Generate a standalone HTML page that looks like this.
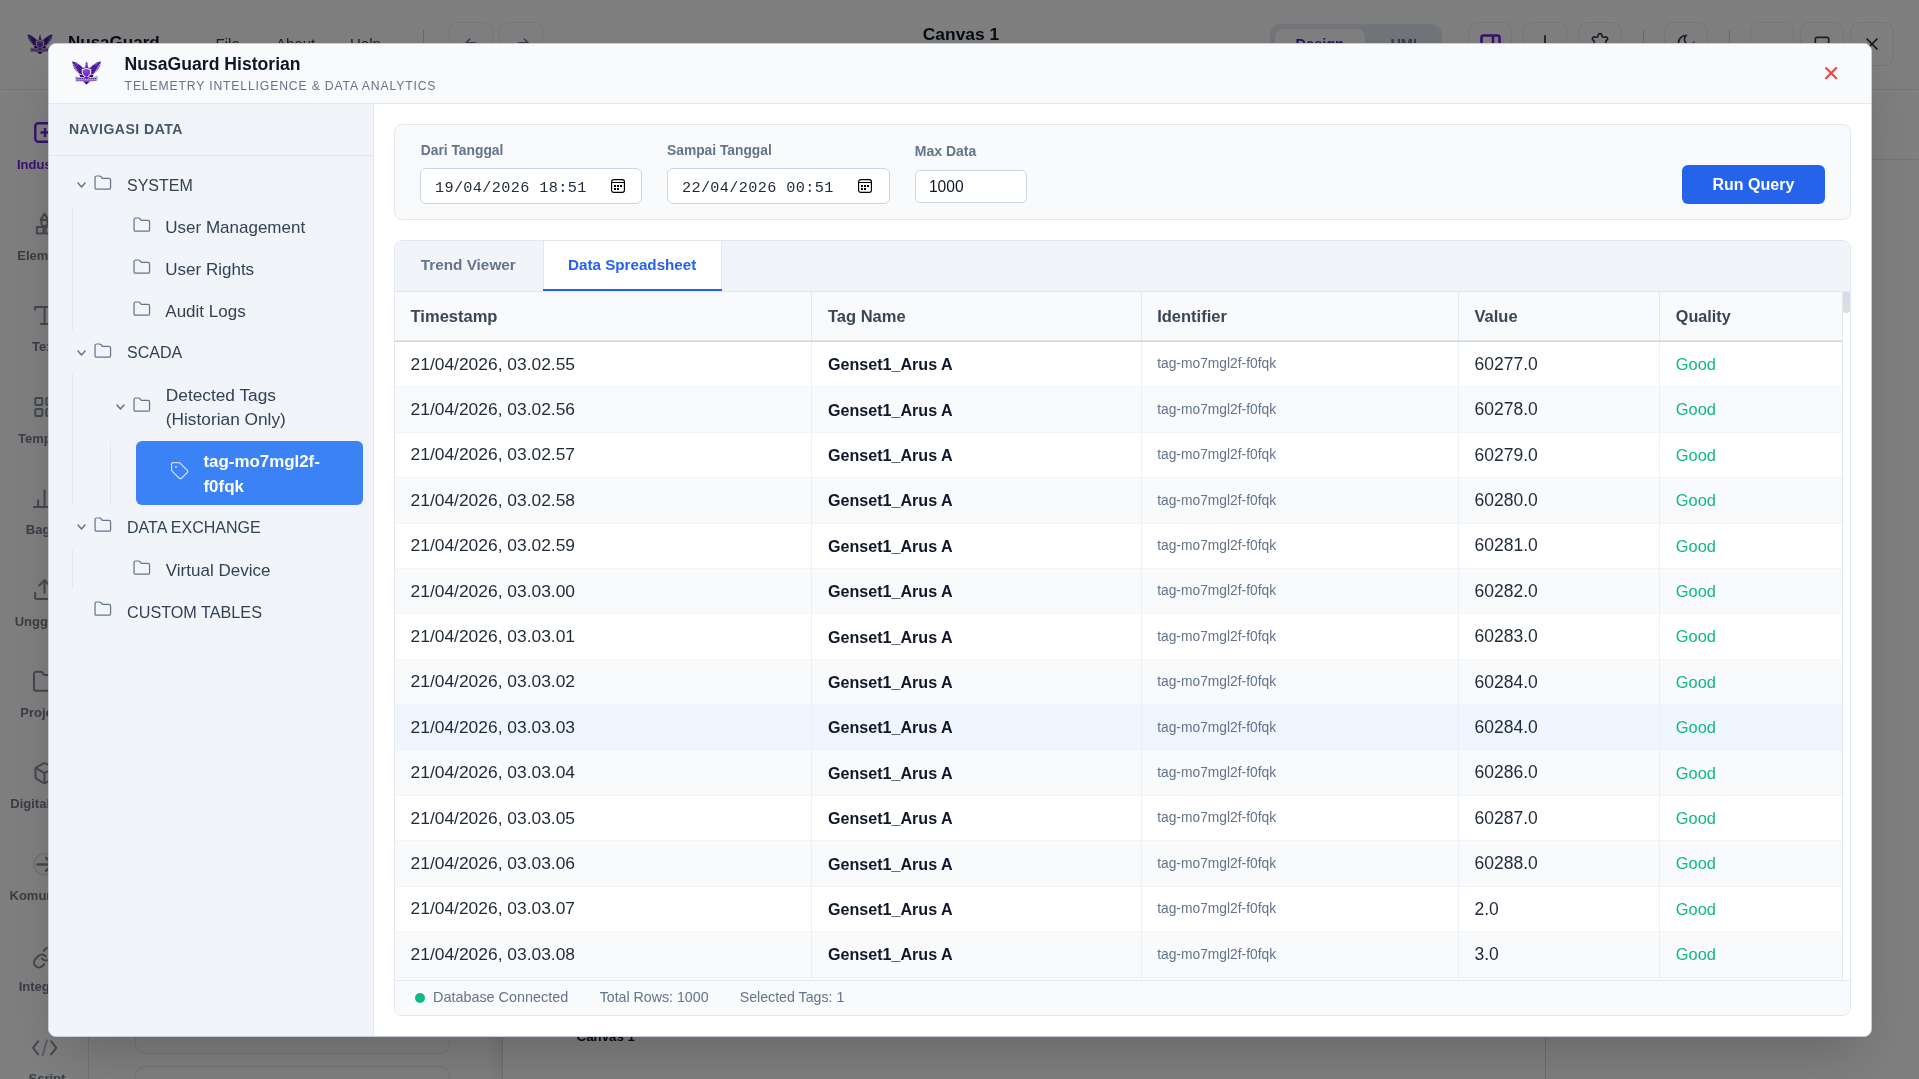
<!DOCTYPE html>
<html><head><meta charset="utf-8"><title>NusaGuard Historian</title>
<style>
html,body{margin:0;padding:0}
body{width:1919px;height:1079px;overflow:hidden;position:relative;font-family:"Liberation Sans",sans-serif;background:#808080}
.t{position:absolute;white-space:nowrap}
.r{position:absolute}
</style></head><body>
<div class="r" style="left:0;top:0;width:1919px;height:1079px;will-change:transform;overflow:hidden"><div class="r" style="left:0.00px;top:0.00px;width:1919.00px;height:1079.00px;background:#f8fafc"></div><div class="r" style="left:0.00px;top:0.00px;width:1919.00px;height:89.00px;background:#fff;border-bottom:1px solid #e2e8f0;box-sizing:content-box"></div><svg class="r" style="left:26.6px;top:33.8px" width="26" height="20.5" viewBox="0 0 29 23.5">
<defs><linearGradient id="lgbg" x1="0" y1="0" x2="0" y2="1"><stop offset="0" stop-color="#9d4edd"/><stop offset="1" stop-color="#5b21b6"/></linearGradient></defs>
<path d="M0.2 0.3 C4 1.5 8 3.5 10.8 6.8 L11.8 13.5 L8 13 C5 11.5 2.5 8.5 1 4.8 Z" fill="#4c1d95"/>
<path d="M28.8 0.3 C25 1.5 21 3.5 18.2 6.8 L17.2 13.5 L21 13 C24 11.5 26.5 8.5 28 4.8 Z" fill="#4c1d95"/>
<path d="M3 1.6 L6 4.2" stroke="#7c3aed" stroke-width="1.6"/><path d="M26 1.6 L23 4.2" stroke="#7c3aed" stroke-width="1.6"/>
<path d="M0.9 2.8 L3.6 6.2 M1.7 5.4 L5 8.8 M3.2 8.4 L6.6 11.4" stroke="#d8cfe8" stroke-width=".9" opacity=".85"/>
<path d="M28.1 2.8 L25.4 6.2 M27.3 5.4 L24 8.8 M25.8 8.4 L22.4 11.4" stroke="#d8cfe8" stroke-width=".9" opacity=".85"/>
<path d="M13.3 7 L13.7 2.2 L14.6 0.8 L15.5 2.2 L15.9 7 Z" fill="#5b21b6"/>
<path d="M14.2 2.2 L15.1 2.7 L14.8 4.8Z" fill="#e9d5ff"/>
<path d="M9.2 8 L14.5 6.4 L19.8 8 L19.6 12 C19.1 14.2 16.9 16.2 14.5 17.8 C12.1 16.2 9.9 14.2 9.4 12 Z" fill="#f1ecf9" stroke="#2e1065" stroke-width=".7"/>
<path d="M10.7 8.9 L14.5 7.7 L18.3 8.9 L18.1 12 C17.6 13.7 16.2 15 14.5 16.2 C12.8 15 11.4 13.7 10.9 12 Z" fill="url(#lgbg)"/>
<path d="M7.2 13.6 L10.5 14.3 L14.5 18 L18.5 14.3 L21.8 13.6 L20.5 16.3 L8.5 16.3 Z" fill="#3b0764"/>
<path d="M3 15.6 L9.5 16.2 L14.5 18.6 L19.5 16.2 L26 15 L25.4 19.8 L19 20.6 L14.5 21.6 L10 20.6 L3.6 20.4 Z" fill="#b7a6d6"/>
<path d="M4.6 17.5 H24.6 M4.6 19.2 H24.2" stroke="#5b21b6" stroke-width=".95" stroke-dasharray="1.3 .5"/>
<path d="M11.2 20.6 L14.5 23.4 L17.8 20.6 Z" fill="#3b0764"/>
</svg><div class="t" style="left:68.00px;top:34.40px;font-size:17px;line-height:17px;color:#0f172a;font-weight:700;letter-spacing:0px;">NusaGuard</div><div class="t" style="left:215.60px;top:35.50px;font-size:15px;line-height:15px;color:#334155;font-weight:400;letter-spacing:0px;">File</div><div class="t" style="left:276.00px;top:35.50px;font-size:15px;line-height:15px;color:#334155;font-weight:400;letter-spacing:0px;">About</div><div class="t" style="left:350.00px;top:35.50px;font-size:15px;line-height:15px;color:#334155;font-weight:400;letter-spacing:0px;">Help</div><div class="r" style="left:423.00px;top:30.00px;width:1.00px;height:30.00px;background:#cbd5e1"></div><div class="r" style="left:449.00px;top:22.30px;width:44.00px;height:44.00px;border:1px solid #e9edf2;border-radius:9px;box-sizing:border-box"></div><svg class="r" style="left:462.50px;top:35.50px;overflow:visible;" width="18" height="18" viewBox="0 0 24 24"><path d="M9 14 4 9l5-5M4 9h10.5a5.5 5.5 0 0 1 5.5 5.5a5.5 5.5 0 0 1-5.5 5.5H11" fill="none" stroke="#64748b" stroke-width="2" stroke-linecap="round" stroke-linejoin="round"/></svg><div class="r" style="left:499.00px;top:22.30px;width:44.00px;height:44.00px;border:1px solid #e9edf2;border-radius:9px;box-sizing:border-box"></div><svg class="r" style="left:512.50px;top:35.50px;overflow:visible;" width="18" height="18" viewBox="0 0 24 24"><path d="m15 14 5-5-5-5M20 9H9.5A5.5 5.5 0 0 0 4 14.5A5.5 5.5 0 0 0 9.5 20H13" fill="none" stroke="#64748b" stroke-width="2" stroke-linecap="round" stroke-linejoin="round"/></svg><div class="t" style="left:922.80px;top:25.70px;font-size:17.4px;line-height:17.4px;color:#0f172a;font-weight:700;letter-spacing:0px;">Canvas 1</div><div class="r" style="left:1270.00px;top:24.00px;width:172.00px;height:40.00px;background:#e2e8f0;border-radius:11px"></div><div class="r" style="left:1275.00px;top:28.50px;width:90.00px;height:31.00px;background:#fff;border-radius:8px;box-shadow:0 1px 2px rgba(0,0,0,.08)"></div><div class="t" style="left:1295.60px;top:36.75px;font-size:14.5px;line-height:14.5px;color:#5b21b6;font-weight:700;letter-spacing:0px;">Design</div><div class="t" style="left:1390.40px;top:36.75px;font-size:14.5px;line-height:14.5px;color:#64748b;font-weight:700;letter-spacing:0px;">HMI</div><div class="r" style="left:1468.00px;top:22.30px;width:44.00px;height:44.00px;border:1px solid #e9edf2;border-radius:9px;box-sizing:border-box;background:#fff"></div><div class="r" style="left:1523.00px;top:22.30px;width:44.00px;height:44.00px;border:1px solid #e9edf2;border-radius:9px;box-sizing:border-box;background:#fff"></div><div class="r" style="left:1578.00px;top:22.30px;width:44.00px;height:44.00px;border:1px solid #e9edf2;border-radius:9px;box-sizing:border-box;background:#fff"></div><div class="r" style="left:1664.00px;top:22.30px;width:44.00px;height:44.00px;border:1px solid #e9edf2;border-radius:9px;box-sizing:border-box;background:#fff"></div><div class="r" style="left:1750.00px;top:22.30px;width:44.00px;height:44.00px;border:1px solid #e9edf2;border-radius:9px;box-sizing:border-box;background:#fff"></div><div class="r" style="left:1800.00px;top:22.30px;width:44.00px;height:44.00px;border:1px solid #e9edf2;border-radius:9px;box-sizing:border-box;background:#fff"></div><div class="r" style="left:1850.00px;top:22.30px;width:44.00px;height:44.00px;border:1px solid #e9edf2;border-radius:9px;box-sizing:border-box;background:#fff"></div><svg class="r" style="left:1480.40px;top:33.80px;overflow:visible;" width="21" height="20" viewBox="0 0 21 20"><rect x="1.5" y="1.5" width="18" height="17" rx="2" fill="none" stroke="#6d28d9" stroke-width="2.6"/><path d="M13 1.5V18.5" stroke="#6d28d9" stroke-width="2.6"/></svg><svg class="r" style="left:1535.00px;top:34.00px;overflow:visible;" width="20" height="20" viewBox="0 0 20 20"><path d="M10 2V16M5 16H15" stroke="#475569" stroke-width="2" stroke-linecap="round"/></svg><svg class="r" style="left:1590.00px;top:32.00px;overflow:visible;" width="20" height="20" viewBox="0 0 24 24"><path d="M12.22 2h-.44a2 2 0 0 0-2 2v.18a2 2 0 0 1-1 1.73l-.43.25a2 2 0 0 1-2 0l-.15-.08a2 2 0 0 0-2.73.73l-.22.38a2 2 0 0 0 .73 2.73l.15.1a2 2 0 0 1 1 1.72v.51a2 2 0 0 1-1 1.74l-.15.09a2 2 0 0 0-.73 2.73l.22.38a2 2 0 0 0 2.73.73l.15-.08a2 2 0 0 1 2 0l.43.25a2 2 0 0 1 1 1.73V20a2 2 0 0 0 2 2h.44a2 2 0 0 0 2-2v-.18a2 2 0 0 1 1-1.73l.43-.25a2 2 0 0 1 2 0l.15.08a2 2 0 0 0 2.73-.73l.22-.39a2 2 0 0 0-.73-2.73l-.15-.08a2 2 0 0 1-1-1.74v-.5a2 2 0 0 1 1-1.74l.15-.09a2 2 0 0 0 .73-2.73l-.22-.38a2 2 0 0 0-2.73-.73l-.15.08a2 2 0 0 1-2 0l-.43-.25a2 2 0 0 1-1-1.73V4a2 2 0 0 0-2-2z" fill="none" stroke="#334155" stroke-width="2"/></svg><svg class="r" style="left:1676.00px;top:33.00px;overflow:visible;" width="20" height="20" viewBox="0 0 24 24"><path d="M12 3a6 6 0 0 0 9 9 9 9 0 1 1-9-9Z" fill="none" stroke="#334155" stroke-width="2"/></svg><svg class="r" style="left:1812.00px;top:34.00px;overflow:visible;" width="20" height="20" viewBox="0 0 24 24"><rect x="4" y="4" width="16" height="16" rx="2" fill="none" stroke="#334155" stroke-width="2"/></svg><svg class="r" style="left:1862.00px;top:34.00px;overflow:visible;" width="20" height="20" viewBox="0 0 24 24"><path d="M18 6L6 18M6 6l12 12" fill="none" stroke="#1e293b" stroke-width="2" stroke-linecap="round"/></svg><div class="r" style="left:1643.00px;top:30.00px;width:1.00px;height:28.00px;background:#cbd5e1"></div><div class="r" style="left:1729.00px;top:30.00px;width:1.00px;height:28.00px;background:#cbd5e1"></div><div class="r" style="left:0.00px;top:90.00px;width:89.00px;height:989.00px;background:#fff;border-right:1px solid #e2e8f0;box-sizing:border-box"></div><div class="t" style="left:17.00px;top:157.50px;font-size:13px;line-height:13px;color:#6d28d9;font-weight:700;letter-spacing:0px;">Industri</div><div class="t" style="left:17.30px;top:248.90px;font-size:13px;line-height:13px;color:#737d8d;font-weight:700;letter-spacing:0px;">Elements</div><div class="t" style="left:32.00px;top:340.30px;font-size:13px;line-height:13px;color:#737d8d;font-weight:700;letter-spacing:0px;">Text</div><div class="t" style="left:18.00px;top:431.70px;font-size:13px;line-height:13px;color:#737d8d;font-weight:700;letter-spacing:0px;">Template</div><div class="t" style="left:25.80px;top:523.10px;font-size:13px;line-height:13px;color:#737d8d;font-weight:700;letter-spacing:0px;">Bagan</div><div class="t" style="left:14.70px;top:614.50px;font-size:13px;line-height:13px;color:#737d8d;font-weight:700;letter-spacing:0px;">Unggah File</div><div class="t" style="left:20.30px;top:705.90px;font-size:13px;line-height:13px;color:#737d8d;font-weight:700;letter-spacing:0px;">Project</div><div class="t" style="left:10.30px;top:797.30px;font-size:13px;line-height:13px;color:#737d8d;font-weight:700;letter-spacing:0px;">Digital Twin</div><div class="t" style="left:9.50px;top:888.70px;font-size:13px;line-height:13px;color:#737d8d;font-weight:700;letter-spacing:0px;">Komunikasi</div><div class="t" style="left:18.70px;top:980.10px;font-size:13px;line-height:13px;color:#737d8d;font-weight:700;letter-spacing:0px;">Integrasi</div><div class="t" style="left:28.50px;top:1071.50px;font-size:13px;line-height:13px;color:#737d8d;font-weight:700;letter-spacing:0px;">Script</div><svg class="r" style="left:34.00px;top:122.00px;overflow:visible;" width="22" height="21" viewBox="0 0 22 21"><rect x="1.3" y="1.3" width="19.4" height="18.4" rx="3" fill="none" stroke="#6d28d9" stroke-width="2.4"/><path d="M11 6V15M6.5 10.5H15.5" stroke="#6d28d9" stroke-width="2.4"/></svg><svg class="r" style="left:0.00px;top:0.00px;overflow:visible;" width="90" height="1079" viewBox="0 0 90 1079"><g fill="none" stroke="#88909e" stroke-width="2" stroke-linecap="round" stroke-linejoin="round"><path d="M44.5 213.6 L40.6 219.9 H48.4 Z"/><circle cx="44.5" cy="222.9" r="3.2"/><rect x="36.9" y="226.9" width="6.6" height="6.5"/><rect x="45.5" y="226.9" width="6.6" height="6.5"/><path d="M35.2 309.6 V307.1 H53.8 V309.6 M44.6 307.1 V323.9 M41.1 323.9 H48.1" stroke-linecap="square" stroke-linejoin="miter"/><g transform="translate(32.3,395.1) scale(1.0)" stroke-width="2.000"><rect x="3" y="3" width="7" height="7" rx="1"/><rect x="14" y="3" width="7" height="7" rx="1"/><rect x="14" y="14" width="7" height="7" rx="1"/><rect x="3" y="14" width="7" height="7" rx="1"/></g><path d="M34.2 506.9 H54.8 M38.1 500.5 V506.9 M44.6 490.4 V506.9 M51.1 495.5 V506.9" stroke-linecap="square"/><g transform="translate(31.9,577.05) scale(1.05)" stroke-width="1.905"><path d="M21 15v4a2 2 0 0 1-2 2H5a2 2 0 0 1-2-2v-4"/><path d="m17 8-5-5-5 5"/><path d="M12 3v12"/></g><g transform="translate(31.76,668.4) scale(1.12)" stroke-width="1.786"><path d="M20 20a2 2 0 0 0 2-2V8a2 2 0 0 0-2-2h-7.9a2 2 0 0 1-1.69-.9L9.6 3.9A2 2 0 0 0 7.93 3H4a2 2 0 0 0-2 2v13a2 2 0 0 0 2 2Z"/></g><g transform="translate(32.5,761.2) scale(1.0)" stroke-width="2.000"><path d="M21 8a2 2 0 0 0-1-1.73l-7-4a2 2 0 0 0-2 0l-7 4A2 2 0 0 0 3 8v8a2 2 0 0 0 1 1.73l7 4a2 2 0 0 0 2 0l7-4A2 2 0 0 0 21 16Z"/><path d="m3.3 7 8.7 5 8.7-5"/><path d="M12 22V12"/></g><circle cx="44.6" cy="864.3" r="10.6" stroke="#e3e7ec" stroke-width="1.8"/><path d="M37.4 864.4 H52.5 M46 857.9 L52.5 864.4 L46 870.9" stroke-width="2.5"/><g transform="translate(32,945.5) scale(1.0)" stroke-width="2.000"><path d="M10 13a5 5 0 0 0 7.54.54l3-3a5 5 0 0 0-7.07-7.07l-1.72 1.71"/><path d="M14 11a5 5 0 0 0-7.54-.54l-3 3a5 5 0 0 0 7.07 7.07l1.71-1.71"/></g><path d="M38.2 1041.2 L33 1047.8 L38.2 1054.4 M51.1 1041.2 L56.3 1047.8 L51.1 1054.4"/><path d="M47 1040.2 L42.6 1055.4" stroke="#b3b9c2"/></g></svg><div class="r" style="left:89.00px;top:90.00px;width:414.00px;height:989.00px;background:#fff;border-right:1px solid #e2e8f0;box-sizing:border-box"></div><div class="r" style="left:135.00px;top:1000.00px;width:315.00px;height:54.00px;border:1px solid #e2e8f0;border-radius:10px;box-sizing:border-box"></div><div class="r" style="left:135.00px;top:1066.00px;width:315.00px;height:54.00px;border:1px solid #e2e8f0;border-radius:10px;box-sizing:border-box"></div><div class="r" style="left:503.00px;top:90.00px;width:1042.00px;height:989.00px;background:#f1f5f9"></div><div class="r" style="left:503.00px;top:1000.00px;width:1042.00px;height:79.00px;background:#fff;box-shadow:0 0 20px rgba(0,0,0,.15)"></div><div class="t" style="left:576.60px;top:1029.65px;font-size:13.3px;line-height:13.3px;color:#0f172a;font-weight:700;letter-spacing:0px;">Canvas 1</div><div class="r" style="left:1545.00px;top:90.00px;width:374.00px;height:989.00px;background:#fff;border-left:1px solid #d5dbe3;box-sizing:border-box"></div><div class="r" style="left:1546.00px;top:159.00px;width:373.00px;height:1.00px;background:#e2e8f0"></div></div><div class="r" style="left:0.00px;top:0.00px;width:1919.00px;height:1079.00px;background:rgba(0,0,0,.5)"></div><div class="r" style="will-change:transform;left:48px;top:43px;width:1824px;height:994px;box-sizing:border-box;border:1px solid #c5ced9;border-radius:8px;background:#fff;overflow:hidden;box-shadow:0 25px 50px -12px rgba(0,0,0,.2)"><div class="r" style="left:0.00px;top:0.00px;width:1822.00px;height:60.00px;background:#f8fafc;border-bottom:1px solid #e2e8f0;box-sizing:border-box"></div><div class="t" style="left:75.60px;top:11.90px;font-size:17.6px;line-height:17.6px;color:#0f172a;font-weight:700;letter-spacing:0px;">NusaGuard Historian</div><div class="t" style="left:75.60px;top:35.80px;font-size:12.2px;line-height:12.2px;color:#64748b;font-weight:400;letter-spacing:0.85px;">TELEMETRY INTELLIGENCE &amp; DATA ANALYTICS</div><svg class="r" style="left:1776.00px;top:23.20px;overflow:visible;" width="12.2" height="12.2" viewBox="0 0 12 12"><path d="M1 1L11 11M11 1L1 11" stroke="#ef4444" stroke-width="2.1" stroke-linecap="round"/></svg><svg class="r" style="left:22.9px;top:17.2px" width="29" height="23.5" viewBox="0 0 29 23.5">
<defs><linearGradient id="lgm" x1="0" y1="0" x2="0" y2="1"><stop offset="0" stop-color="#9d4edd"/><stop offset="1" stop-color="#5b21b6"/></linearGradient></defs>
<path d="M0.2 0.3 C4 1.5 8 3.5 10.8 6.8 L11.8 13.5 L8 13 C5 11.5 2.5 8.5 1 4.8 Z" fill="#4c1d95"/>
<path d="M28.8 0.3 C25 1.5 21 3.5 18.2 6.8 L17.2 13.5 L21 13 C24 11.5 26.5 8.5 28 4.8 Z" fill="#4c1d95"/>
<path d="M3 1.6 L6 4.2" stroke="#7c3aed" stroke-width="1.6"/><path d="M26 1.6 L23 4.2" stroke="#7c3aed" stroke-width="1.6"/>
<path d="M0.9 2.8 L3.6 6.2 M1.7 5.4 L5 8.8 M3.2 8.4 L6.6 11.4" stroke="#d8cfe8" stroke-width=".9" opacity=".85"/>
<path d="M28.1 2.8 L25.4 6.2 M27.3 5.4 L24 8.8 M25.8 8.4 L22.4 11.4" stroke="#d8cfe8" stroke-width=".9" opacity=".85"/>
<path d="M13.3 7 L13.7 2.2 L14.6 0.8 L15.5 2.2 L15.9 7 Z" fill="#5b21b6"/>
<path d="M14.2 2.2 L15.1 2.7 L14.8 4.8Z" fill="#e9d5ff"/>
<path d="M9.2 8 L14.5 6.4 L19.8 8 L19.6 12 C19.1 14.2 16.9 16.2 14.5 17.8 C12.1 16.2 9.9 14.2 9.4 12 Z" fill="#f1ecf9" stroke="#2e1065" stroke-width=".7"/>
<path d="M10.7 8.9 L14.5 7.7 L18.3 8.9 L18.1 12 C17.6 13.7 16.2 15 14.5 16.2 C12.8 15 11.4 13.7 10.9 12 Z" fill="url(#lgm)"/>
<path d="M7.2 13.6 L10.5 14.3 L14.5 18 L18.5 14.3 L21.8 13.6 L20.5 16.3 L8.5 16.3 Z" fill="#3b0764"/>
<path d="M3 15.6 L9.5 16.2 L14.5 18.6 L19.5 16.2 L26 15 L25.4 19.8 L19 20.6 L14.5 21.6 L10 20.6 L3.6 20.4 Z" fill="#b7a6d6"/>
<path d="M4.6 17.5 H24.6 M4.6 19.2 H24.2" stroke="#5b21b6" stroke-width=".95" stroke-dasharray="1.3 .5"/>
<path d="M11.2 20.6 L14.5 23.4 L17.8 20.6 Z" fill="#3b0764"/>
</svg><div class="r" style="left:0.00px;top:60.00px;width:325.00px;height:932.00px;background:#f1f5f9;border-right:1px solid #e2e8f0;box-sizing:border-box"></div><div class="r" style="left:0.00px;top:111.00px;width:324.00px;height:1.00px;background:#e2e8f0"></div><div class="t" style="left:20.00px;top:78.20px;font-size:14px;line-height:14px;color:#475569;font-weight:700;letter-spacing:0.5px;">NAVIGASI DATA</div><svg class="r" style="left:28.00px;top:138.00px;overflow:visible;" width="9" height="6.5" viewBox="0 0 9 6.5"><path d="M1 1 L4.5 5 L8 1" fill="none" stroke="#64748b" stroke-width="1.5" stroke-linecap="round" stroke-linejoin="round"/></svg><svg class="r" style="left:46.00px;top:131.80px;overflow:visible;" width="15.6" height="13.2" viewBox="2 3 20 17"><g fill="none" stroke="#64748b" stroke-width="1.60" stroke-linejoin="round"><path d="M20 20a2 2 0 0 0 2-2V8a2 2 0 0 0-2-2h-7.9a2 2 0 0 1-1.69-.9L9.6 3.9A2 2 0 0 0 7.93 3H4a2 2 0 0 0-2 2v13a2 2 0 0 0 2 2Z"/></g></svg><div class="t" style="left:78.00px;top:133.60px;font-size:16px;line-height:16px;color:#334155;font-weight:400;letter-spacing:0px;">SYSTEM</div><div class="r" style="left:23.00px;top:164.00px;width:1.00px;height:122.00px;background:#e2e8f0"></div><svg class="r" style="left:84.90px;top:174.00px;overflow:visible;" width="15.6" height="13.2" viewBox="2 3 20 17"><g fill="none" stroke="#64748b" stroke-width="1.60" stroke-linejoin="round"><path d="M20 20a2 2 0 0 0 2-2V8a2 2 0 0 0-2-2h-7.9a2 2 0 0 1-1.69-.9L9.6 3.9A2 2 0 0 0 7.93 3H4a2 2 0 0 0-2 2v13a2 2 0 0 0 2 2Z"/></g></svg><div class="t" style="left:116.30px;top:175.10px;font-size:17px;line-height:17px;color:#334155;font-weight:400;letter-spacing:0px;">User Management</div><svg class="r" style="left:84.90px;top:216.00px;overflow:visible;" width="15.6" height="13.2" viewBox="2 3 20 17"><g fill="none" stroke="#64748b" stroke-width="1.60" stroke-linejoin="round"><path d="M20 20a2 2 0 0 0 2-2V8a2 2 0 0 0-2-2h-7.9a2 2 0 0 1-1.69-.9L9.6 3.9A2 2 0 0 0 7.93 3H4a2 2 0 0 0-2 2v13a2 2 0 0 0 2 2Z"/></g></svg><div class="t" style="left:116.30px;top:217.10px;font-size:17px;line-height:17px;color:#334155;font-weight:400;letter-spacing:0px;">User Rights</div><svg class="r" style="left:84.90px;top:257.50px;overflow:visible;" width="15.6" height="13.2" viewBox="2 3 20 17"><g fill="none" stroke="#64748b" stroke-width="1.60" stroke-linejoin="round"><path d="M20 20a2 2 0 0 0 2-2V8a2 2 0 0 0-2-2h-7.9a2 2 0 0 1-1.69-.9L9.6 3.9A2 2 0 0 0 7.93 3H4a2 2 0 0 0-2 2v13a2 2 0 0 0 2 2Z"/></g></svg><div class="t" style="left:116.30px;top:258.60px;font-size:17px;line-height:17px;color:#334155;font-weight:400;letter-spacing:0px;">Audit Logs</div><svg class="r" style="left:28.00px;top:306.00px;overflow:visible;" width="9" height="6.5" viewBox="0 0 9 6.5"><path d="M1 1 L4.5 5 L8 1" fill="none" stroke="#64748b" stroke-width="1.5" stroke-linecap="round" stroke-linejoin="round"/></svg><svg class="r" style="left:46.00px;top:300.10px;overflow:visible;" width="15.6" height="13.2" viewBox="2 3 20 17"><g fill="none" stroke="#64748b" stroke-width="1.60" stroke-linejoin="round"><path d="M20 20a2 2 0 0 0 2-2V8a2 2 0 0 0-2-2h-7.9a2 2 0 0 1-1.69-.9L9.6 3.9A2 2 0 0 0 7.93 3H4a2 2 0 0 0-2 2v13a2 2 0 0 0 2 2Z"/></g></svg><div class="t" style="left:78.00px;top:301.40px;font-size:16px;line-height:16px;color:#334155;font-weight:400;letter-spacing:0px;">SCADA</div><div class="r" style="left:23.00px;top:330.00px;width:1.00px;height:130.00px;background:#e2e8f0"></div><svg class="r" style="left:66.50px;top:360.00px;overflow:visible;" width="9" height="6.5" viewBox="0 0 9 6.5"><path d="M1 1 L4.5 5 L8 1" fill="none" stroke="#64748b" stroke-width="1.5" stroke-linecap="round" stroke-linejoin="round"/></svg><svg class="r" style="left:84.90px;top:353.50px;overflow:visible;" width="15.6" height="13.2" viewBox="2 3 20 17"><g fill="none" stroke="#64748b" stroke-width="1.60" stroke-linejoin="round"><path d="M20 20a2 2 0 0 0 2-2V8a2 2 0 0 0-2-2h-7.9a2 2 0 0 1-1.69-.9L9.6 3.9A2 2 0 0 0 7.93 3H4a2 2 0 0 0-2 2v13a2 2 0 0 0 2 2Z"/></g></svg><div class="t" style="left:116.80px;top:342.95px;font-size:17.3px;line-height:17.3px;color:#334155;font-weight:400;letter-spacing:0px;">Detected Tags</div><div class="t" style="left:116.80px;top:366.95px;font-size:17.3px;line-height:17.3px;color:#334155;font-weight:400;letter-spacing:0px;">(Historian Only)</div><div class="r" style="left:61.00px;top:397.00px;width:1.00px;height:63.00px;background:#e2e8f0"></div><div class="r" style="left:87.00px;top:397.00px;width:227.00px;height:64.00px;background:#3b82f6;border-radius:6px"></div><svg class="r" style="left:120.50px;top:417.00px;overflow:visible;" width="19.2" height="19.2" viewBox="0 0 24 24"><g fill="none" stroke="#fff" stroke-width="1.5" stroke-linecap="round" stroke-linejoin="round" opacity=".75"><path d="M12.586 2.586A2 2 0 0 0 11.172 2H4a2 2 0 0 0-2 2v7.172a2 2 0 0 0 .586 1.414l8.704 8.704a2.426 2.426 0 0 0 3.42 0l6.58-6.58a2.426 2.426 0 0 0 0-3.42z"/><circle cx="7.5" cy="7.5" r=".5" fill="#fff"/></g></svg><div class="t" style="left:154.50px;top:410.45px;font-size:16.9px;line-height:16.9px;color:#fff;font-weight:700;letter-spacing:0px;">tag-mo7mgl2f-</div><div class="t" style="left:154.50px;top:434.85px;font-size:16.9px;line-height:16.9px;color:#fff;font-weight:700;letter-spacing:0px;">f0fqk</div><svg class="r" style="left:28.00px;top:480.00px;overflow:visible;" width="9" height="6.5" viewBox="0 0 9 6.5"><path d="M1 1 L4.5 5 L8 1" fill="none" stroke="#64748b" stroke-width="1.5" stroke-linecap="round" stroke-linejoin="round"/></svg><svg class="r" style="left:46.00px;top:474.30px;overflow:visible;" width="15.6" height="13.2" viewBox="2 3 20 17"><g fill="none" stroke="#64748b" stroke-width="1.60" stroke-linejoin="round"><path d="M20 20a2 2 0 0 0 2-2V8a2 2 0 0 0-2-2h-7.9a2 2 0 0 1-1.69-.9L9.6 3.9A2 2 0 0 0 7.93 3H4a2 2 0 0 0-2 2v13a2 2 0 0 0 2 2Z"/></g></svg><div class="t" style="left:78.00px;top:475.80px;font-size:16px;line-height:16px;color:#334155;font-weight:400;letter-spacing:0px;">DATA EXCHANGE</div><div class="r" style="left:23.00px;top:506.00px;width:1.00px;height:39.00px;background:#e2e8f0"></div><svg class="r" style="left:84.90px;top:516.50px;overflow:visible;" width="15.6" height="13.2" viewBox="2 3 20 17"><g fill="none" stroke="#64748b" stroke-width="1.60" stroke-linejoin="round"><path d="M20 20a2 2 0 0 0 2-2V8a2 2 0 0 0-2-2h-7.9a2 2 0 0 1-1.69-.9L9.6 3.9A2 2 0 0 0 7.93 3H4a2 2 0 0 0-2 2v13a2 2 0 0 0 2 2Z"/></g></svg><div class="t" style="left:116.80px;top:517.60px;font-size:17px;line-height:17px;color:#334155;font-weight:400;letter-spacing:0px;">Virtual Device</div><svg class="r" style="left:46.00px;top:557.80px;overflow:visible;" width="15.6" height="13.2" viewBox="2 3 20 17"><g fill="none" stroke="#64748b" stroke-width="1.60" stroke-linejoin="round"><path d="M20 20a2 2 0 0 0 2-2V8a2 2 0 0 0-2-2h-7.9a2 2 0 0 1-1.69-.9L9.6 3.9A2 2 0 0 0 7.93 3H4a2 2 0 0 0-2 2v13a2 2 0 0 0 2 2Z"/></g></svg><div class="t" style="left:78.00px;top:559.50px;font-size:16.2px;line-height:16.2px;color:#334155;font-weight:400;letter-spacing:0px;">CUSTOM TABLES</div><div class="r" style="left:345.00px;top:80.00px;width:1457.00px;height:96.00px;background:#f8fafc;border:1px solid #e2e8f0;border-radius:8px;box-sizing:border-box"></div><div class="t" style="left:371.80px;top:99.70px;font-size:13.8px;line-height:13.8px;color:#64748b;font-weight:700;letter-spacing:0px;">Dari Tanggal</div><div class="t" style="left:618.00px;top:99.70px;font-size:13.8px;line-height:13.8px;color:#64748b;font-weight:700;letter-spacing:0px;">Sampai Tanggal</div><div class="t" style="left:865.80px;top:100.40px;font-size:14px;line-height:14px;color:#64748b;font-weight:700;letter-spacing:0px;">Max Data</div><div class="r" style="left:371.00px;top:124.00px;width:222.00px;height:36.00px;background:#fff;border:1px solid #cbd5e1;border-radius:6px;box-sizing:border-box"></div><div class="t" style="left:385.90px;top:137.30px;font-size:15.2px;line-height:15.2px;color:#1e293b;font-weight:400;letter-spacing:0.38px;font-family:'Liberation Mono',monospace;">19/04/2026 18:51</div><svg class="r" style="left:562.00px;top:135.00px;overflow:visible;" width="14" height="14" viewBox="0 0 14 14"><rect x="0.6" y="0.6" width="12.8" height="12.8" rx="2.2" fill="none" stroke="#000" stroke-width="1.15"/><path d="M0.6 3.5H13.4" stroke="#000" stroke-width="1.1"/><g fill="#000"><rect x="3" y="6" width="2" height="2"/><rect x="6" y="6" width="2" height="2"/><rect x="9" y="6" width="2" height="2"/><rect x="3" y="9" width="2" height="2"/><rect x="6" y="9" width="2" height="2"/></g></svg><div class="r" style="left:618.00px;top:124.00px;width:223.00px;height:36.00px;background:#fff;border:1px solid #cbd5e1;border-radius:6px;box-sizing:border-box"></div><div class="t" style="left:632.90px;top:137.30px;font-size:15.2px;line-height:15.2px;color:#1e293b;font-weight:400;letter-spacing:0.38px;font-family:'Liberation Mono',monospace;">22/04/2026 00:51</div><svg class="r" style="left:809.00px;top:135.00px;overflow:visible;" width="14" height="14" viewBox="0 0 14 14"><rect x="0.6" y="0.6" width="12.8" height="12.8" rx="2.2" fill="none" stroke="#000" stroke-width="1.15"/><path d="M0.6 3.5H13.4" stroke="#000" stroke-width="1.1"/><g fill="#000"><rect x="3" y="6" width="2" height="2"/><rect x="6" y="6" width="2" height="2"/><rect x="9" y="6" width="2" height="2"/><rect x="3" y="9" width="2" height="2"/><rect x="6" y="9" width="2" height="2"/></g></svg><div class="r" style="left:866.00px;top:126.00px;width:112.00px;height:33.00px;background:#fff;border:1px solid #cbd5e1;border-radius:5px;box-sizing:border-box"></div><div class="t" style="left:879.90px;top:134.50px;font-size:15.6px;line-height:15.6px;color:#0f172a;font-weight:400;letter-spacing:0px;">1000</div><div class="r" style="left:1633.00px;top:121.00px;width:143.00px;height:39.00px;background:#2563eb;border-radius:6px"></div><div class="t" style="left:1663.50px;top:132.60px;font-size:16px;line-height:16px;color:#fff;font-weight:700;letter-spacing:0px;">Run Query</div><div class="r" style="left:345.00px;top:196.00px;width:1457.00px;height:776.00px;background:#fff;border:1px solid #e2e8f0;border-radius:8px;box-sizing:border-box"></div><div class="r" style="left:346.00px;top:197.00px;width:1455.00px;height:51.00px;background:#f1f5f9;border-bottom:1px solid #e2e8f0;box-sizing:border-box;border-radius:7px 7px 0 0"></div><div class="r" style="left:493.60px;top:197.00px;width:179.80px;height:50.00px;background:#fff;border-left:1px solid #e2e8f0;border-right:1px solid #e2e8f0;box-sizing:border-box"></div><div class="r" style="left:494.00px;top:245.00px;width:179.00px;height:2.00px;background:#2563eb"></div><div class="t" style="left:371.80px;top:212.75px;font-size:15.3px;line-height:15.3px;color:#64748b;font-weight:700;letter-spacing:0px;">Trend Viewer</div><div class="t" style="left:519.00px;top:212.80px;font-size:15.2px;line-height:15.2px;color:#2563eb;font-weight:700;letter-spacing:0px;">Data Spreadsheet</div><div class="r" style="left:346.00px;top:248.00px;width:1447.00px;height:50.00px;background:#f8fafc;border-bottom:1px solid #cbd5e1;box-sizing:border-box"></div><div class="r" style="left:346.00px;top:296.00px;width:1447.00px;height:1.00px;background:#e4e9f0"></div><div class="r" style="left:762.00px;top:248.00px;width:1.00px;height:48.00px;background:#e2e8f0"></div><div class="r" style="left:1092.00px;top:248.00px;width:1.00px;height:48.00px;background:#e2e8f0"></div><div class="r" style="left:1409.00px;top:248.00px;width:1.00px;height:48.00px;background:#e2e8f0"></div><div class="r" style="left:1610.00px;top:248.00px;width:1.00px;height:48.00px;background:#e2e8f0"></div><div class="t" style="left:361.60px;top:263.75px;font-size:16.5px;line-height:16.5px;color:#3a4658;font-weight:700;letter-spacing:0px;">Timestamp</div><div class="t" style="left:779.00px;top:263.75px;font-size:16.5px;line-height:16.5px;color:#3a4658;font-weight:700;letter-spacing:0px;">Tag Name</div><div class="t" style="left:1108.20px;top:263.75px;font-size:16.5px;line-height:16.5px;color:#3a4658;font-weight:700;letter-spacing:0px;">Identifier</div><div class="t" style="left:1425.50px;top:263.75px;font-size:16.5px;line-height:16.5px;color:#3a4658;font-weight:700;letter-spacing:0px;">Value</div><div class="t" style="left:1626.80px;top:263.90px;font-size:16.2px;line-height:16.2px;color:#3a4658;font-weight:700;letter-spacing:0px;">Quality</div><div class="r" style="left:346px;top:298px;width:1447px;height:638px;overflow:hidden"><div class="r" style="left:0.00px;top:0.00px;width:1448.00px;height:45.40px;background:#ffffff;border-bottom:1px solid #f1f5f9;box-sizing:border-box"></div><div class="r" style="left:416.00px;top:0.00px;width:1.00px;height:45.40px;background:#edf1f7"></div><div class="r" style="left:746.00px;top:0.00px;width:1.00px;height:45.40px;background:#edf1f7"></div><div class="r" style="left:1063.00px;top:0.00px;width:1.00px;height:45.40px;background:#edf1f7"></div><div class="r" style="left:1264.00px;top:0.00px;width:1.00px;height:45.40px;background:#edf1f7"></div><div class="t" style="left:15.60px;top:13.50px;font-size:17.4px;line-height:17.4px;color:#1e293b;font-weight:400;letter-spacing:0px;">21/04/2026, 03.02.55</div><div class="t" style="left:433.00px;top:14.15px;font-size:16.1px;line-height:16.1px;color:#0f172a;font-weight:700;letter-spacing:0px;">Genset1_Arus A</div><div class="t" style="left:762.20px;top:15.30px;font-size:13.8px;line-height:13.8px;color:#64748b;font-weight:400;letter-spacing:0px;">tag-mo7mgl2f-f0fqk</div><div class="t" style="left:1079.50px;top:13.85px;font-size:17.5px;line-height:17.5px;color:#1e293b;font-weight:400;letter-spacing:0px;">60277.0</div><div class="t" style="left:1280.80px;top:14.00px;font-size:16.4px;line-height:16.4px;color:#10b981;font-weight:400;letter-spacing:0px;">Good</div><div class="r" style="left:0.00px;top:45.40px;width:1448.00px;height:45.40px;background:#f8fafc;border-bottom:1px solid #f1f5f9;box-sizing:border-box"></div><div class="r" style="left:416.00px;top:45.40px;width:1.00px;height:45.40px;background:#edf1f7"></div><div class="r" style="left:746.00px;top:45.40px;width:1.00px;height:45.40px;background:#edf1f7"></div><div class="r" style="left:1063.00px;top:45.40px;width:1.00px;height:45.40px;background:#edf1f7"></div><div class="r" style="left:1264.00px;top:45.40px;width:1.00px;height:45.40px;background:#edf1f7"></div><div class="t" style="left:15.60px;top:58.90px;font-size:17.4px;line-height:17.4px;color:#1e293b;font-weight:400;letter-spacing:0px;">21/04/2026, 03.02.56</div><div class="t" style="left:433.00px;top:59.55px;font-size:16.1px;line-height:16.1px;color:#0f172a;font-weight:700;letter-spacing:0px;">Genset1_Arus A</div><div class="t" style="left:762.20px;top:60.70px;font-size:13.8px;line-height:13.8px;color:#64748b;font-weight:400;letter-spacing:0px;">tag-mo7mgl2f-f0fqk</div><div class="t" style="left:1079.50px;top:59.25px;font-size:17.5px;line-height:17.5px;color:#1e293b;font-weight:400;letter-spacing:0px;">60278.0</div><div class="t" style="left:1280.80px;top:59.40px;font-size:16.4px;line-height:16.4px;color:#10b981;font-weight:400;letter-spacing:0px;">Good</div><div class="r" style="left:0.00px;top:90.80px;width:1448.00px;height:45.40px;background:#ffffff;border-bottom:1px solid #f1f5f9;box-sizing:border-box"></div><div class="r" style="left:416.00px;top:90.80px;width:1.00px;height:45.40px;background:#edf1f7"></div><div class="r" style="left:746.00px;top:90.80px;width:1.00px;height:45.40px;background:#edf1f7"></div><div class="r" style="left:1063.00px;top:90.80px;width:1.00px;height:45.40px;background:#edf1f7"></div><div class="r" style="left:1264.00px;top:90.80px;width:1.00px;height:45.40px;background:#edf1f7"></div><div class="t" style="left:15.60px;top:104.30px;font-size:17.4px;line-height:17.4px;color:#1e293b;font-weight:400;letter-spacing:0px;">21/04/2026, 03.02.57</div><div class="t" style="left:433.00px;top:104.95px;font-size:16.1px;line-height:16.1px;color:#0f172a;font-weight:700;letter-spacing:0px;">Genset1_Arus A</div><div class="t" style="left:762.20px;top:106.10px;font-size:13.8px;line-height:13.8px;color:#64748b;font-weight:400;letter-spacing:0px;">tag-mo7mgl2f-f0fqk</div><div class="t" style="left:1079.50px;top:104.65px;font-size:17.5px;line-height:17.5px;color:#1e293b;font-weight:400;letter-spacing:0px;">60279.0</div><div class="t" style="left:1280.80px;top:104.80px;font-size:16.4px;line-height:16.4px;color:#10b981;font-weight:400;letter-spacing:0px;">Good</div><div class="r" style="left:0.00px;top:136.20px;width:1448.00px;height:45.40px;background:#f8fafc;border-bottom:1px solid #f1f5f9;box-sizing:border-box"></div><div class="r" style="left:416.00px;top:136.20px;width:1.00px;height:45.40px;background:#edf1f7"></div><div class="r" style="left:746.00px;top:136.20px;width:1.00px;height:45.40px;background:#edf1f7"></div><div class="r" style="left:1063.00px;top:136.20px;width:1.00px;height:45.40px;background:#edf1f7"></div><div class="r" style="left:1264.00px;top:136.20px;width:1.00px;height:45.40px;background:#edf1f7"></div><div class="t" style="left:15.60px;top:149.70px;font-size:17.4px;line-height:17.4px;color:#1e293b;font-weight:400;letter-spacing:0px;">21/04/2026, 03.02.58</div><div class="t" style="left:433.00px;top:150.35px;font-size:16.1px;line-height:16.1px;color:#0f172a;font-weight:700;letter-spacing:0px;">Genset1_Arus A</div><div class="t" style="left:762.20px;top:151.50px;font-size:13.8px;line-height:13.8px;color:#64748b;font-weight:400;letter-spacing:0px;">tag-mo7mgl2f-f0fqk</div><div class="t" style="left:1079.50px;top:150.05px;font-size:17.5px;line-height:17.5px;color:#1e293b;font-weight:400;letter-spacing:0px;">60280.0</div><div class="t" style="left:1280.80px;top:150.20px;font-size:16.4px;line-height:16.4px;color:#10b981;font-weight:400;letter-spacing:0px;">Good</div><div class="r" style="left:0.00px;top:181.60px;width:1448.00px;height:45.40px;background:#ffffff;border-bottom:1px solid #f1f5f9;box-sizing:border-box"></div><div class="r" style="left:416.00px;top:181.60px;width:1.00px;height:45.40px;background:#edf1f7"></div><div class="r" style="left:746.00px;top:181.60px;width:1.00px;height:45.40px;background:#edf1f7"></div><div class="r" style="left:1063.00px;top:181.60px;width:1.00px;height:45.40px;background:#edf1f7"></div><div class="r" style="left:1264.00px;top:181.60px;width:1.00px;height:45.40px;background:#edf1f7"></div><div class="t" style="left:15.60px;top:195.10px;font-size:17.4px;line-height:17.4px;color:#1e293b;font-weight:400;letter-spacing:0px;">21/04/2026, 03.02.59</div><div class="t" style="left:433.00px;top:195.75px;font-size:16.1px;line-height:16.1px;color:#0f172a;font-weight:700;letter-spacing:0px;">Genset1_Arus A</div><div class="t" style="left:762.20px;top:196.90px;font-size:13.8px;line-height:13.8px;color:#64748b;font-weight:400;letter-spacing:0px;">tag-mo7mgl2f-f0fqk</div><div class="t" style="left:1079.50px;top:195.45px;font-size:17.5px;line-height:17.5px;color:#1e293b;font-weight:400;letter-spacing:0px;">60281.0</div><div class="t" style="left:1280.80px;top:195.60px;font-size:16.4px;line-height:16.4px;color:#10b981;font-weight:400;letter-spacing:0px;">Good</div><div class="r" style="left:0.00px;top:227.00px;width:1448.00px;height:45.40px;background:#f8fafc;border-bottom:1px solid #f1f5f9;box-sizing:border-box"></div><div class="r" style="left:416.00px;top:227.00px;width:1.00px;height:45.40px;background:#edf1f7"></div><div class="r" style="left:746.00px;top:227.00px;width:1.00px;height:45.40px;background:#edf1f7"></div><div class="r" style="left:1063.00px;top:227.00px;width:1.00px;height:45.40px;background:#edf1f7"></div><div class="r" style="left:1264.00px;top:227.00px;width:1.00px;height:45.40px;background:#edf1f7"></div><div class="t" style="left:15.60px;top:240.50px;font-size:17.4px;line-height:17.4px;color:#1e293b;font-weight:400;letter-spacing:0px;">21/04/2026, 03.03.00</div><div class="t" style="left:433.00px;top:241.15px;font-size:16.1px;line-height:16.1px;color:#0f172a;font-weight:700;letter-spacing:0px;">Genset1_Arus A</div><div class="t" style="left:762.20px;top:242.30px;font-size:13.8px;line-height:13.8px;color:#64748b;font-weight:400;letter-spacing:0px;">tag-mo7mgl2f-f0fqk</div><div class="t" style="left:1079.50px;top:240.85px;font-size:17.5px;line-height:17.5px;color:#1e293b;font-weight:400;letter-spacing:0px;">60282.0</div><div class="t" style="left:1280.80px;top:241.00px;font-size:16.4px;line-height:16.4px;color:#10b981;font-weight:400;letter-spacing:0px;">Good</div><div class="r" style="left:0.00px;top:272.40px;width:1448.00px;height:45.40px;background:#ffffff;border-bottom:1px solid #f1f5f9;box-sizing:border-box"></div><div class="r" style="left:416.00px;top:272.40px;width:1.00px;height:45.40px;background:#edf1f7"></div><div class="r" style="left:746.00px;top:272.40px;width:1.00px;height:45.40px;background:#edf1f7"></div><div class="r" style="left:1063.00px;top:272.40px;width:1.00px;height:45.40px;background:#edf1f7"></div><div class="r" style="left:1264.00px;top:272.40px;width:1.00px;height:45.40px;background:#edf1f7"></div><div class="t" style="left:15.60px;top:285.90px;font-size:17.4px;line-height:17.4px;color:#1e293b;font-weight:400;letter-spacing:0px;">21/04/2026, 03.03.01</div><div class="t" style="left:433.00px;top:286.55px;font-size:16.1px;line-height:16.1px;color:#0f172a;font-weight:700;letter-spacing:0px;">Genset1_Arus A</div><div class="t" style="left:762.20px;top:287.70px;font-size:13.8px;line-height:13.8px;color:#64748b;font-weight:400;letter-spacing:0px;">tag-mo7mgl2f-f0fqk</div><div class="t" style="left:1079.50px;top:286.25px;font-size:17.5px;line-height:17.5px;color:#1e293b;font-weight:400;letter-spacing:0px;">60283.0</div><div class="t" style="left:1280.80px;top:286.40px;font-size:16.4px;line-height:16.4px;color:#10b981;font-weight:400;letter-spacing:0px;">Good</div><div class="r" style="left:0.00px;top:317.80px;width:1448.00px;height:45.40px;background:#f8fafc;border-bottom:1px solid #f1f5f9;box-sizing:border-box"></div><div class="r" style="left:416.00px;top:317.80px;width:1.00px;height:45.40px;background:#edf1f7"></div><div class="r" style="left:746.00px;top:317.80px;width:1.00px;height:45.40px;background:#edf1f7"></div><div class="r" style="left:1063.00px;top:317.80px;width:1.00px;height:45.40px;background:#edf1f7"></div><div class="r" style="left:1264.00px;top:317.80px;width:1.00px;height:45.40px;background:#edf1f7"></div><div class="t" style="left:15.60px;top:331.30px;font-size:17.4px;line-height:17.4px;color:#1e293b;font-weight:400;letter-spacing:0px;">21/04/2026, 03.03.02</div><div class="t" style="left:433.00px;top:331.95px;font-size:16.1px;line-height:16.1px;color:#0f172a;font-weight:700;letter-spacing:0px;">Genset1_Arus A</div><div class="t" style="left:762.20px;top:333.10px;font-size:13.8px;line-height:13.8px;color:#64748b;font-weight:400;letter-spacing:0px;">tag-mo7mgl2f-f0fqk</div><div class="t" style="left:1079.50px;top:331.65px;font-size:17.5px;line-height:17.5px;color:#1e293b;font-weight:400;letter-spacing:0px;">60284.0</div><div class="t" style="left:1280.80px;top:331.80px;font-size:16.4px;line-height:16.4px;color:#10b981;font-weight:400;letter-spacing:0px;">Good</div><div class="r" style="left:0.00px;top:363.20px;width:1448.00px;height:45.40px;background:#eff6ff;border-bottom:1px solid #f1f5f9;box-sizing:border-box"></div><div class="r" style="left:416.00px;top:363.20px;width:1.00px;height:45.40px;background:#e6effc"></div><div class="r" style="left:746.00px;top:363.20px;width:1.00px;height:45.40px;background:#e6effc"></div><div class="r" style="left:1063.00px;top:363.20px;width:1.00px;height:45.40px;background:#e6effc"></div><div class="r" style="left:1264.00px;top:363.20px;width:1.00px;height:45.40px;background:#e6effc"></div><div class="t" style="left:15.60px;top:376.70px;font-size:17.4px;line-height:17.4px;color:#1e293b;font-weight:400;letter-spacing:0px;">21/04/2026, 03.03.03</div><div class="t" style="left:433.00px;top:377.35px;font-size:16.1px;line-height:16.1px;color:#0f172a;font-weight:700;letter-spacing:0px;">Genset1_Arus A</div><div class="t" style="left:762.20px;top:378.50px;font-size:13.8px;line-height:13.8px;color:#64748b;font-weight:400;letter-spacing:0px;">tag-mo7mgl2f-f0fqk</div><div class="t" style="left:1079.50px;top:377.05px;font-size:17.5px;line-height:17.5px;color:#1e293b;font-weight:400;letter-spacing:0px;">60284.0</div><div class="t" style="left:1280.80px;top:377.20px;font-size:16.4px;line-height:16.4px;color:#10b981;font-weight:400;letter-spacing:0px;">Good</div><div class="r" style="left:0.00px;top:408.60px;width:1448.00px;height:45.40px;background:#f8fafc;border-bottom:1px solid #f1f5f9;box-sizing:border-box"></div><div class="r" style="left:416.00px;top:408.60px;width:1.00px;height:45.40px;background:#edf1f7"></div><div class="r" style="left:746.00px;top:408.60px;width:1.00px;height:45.40px;background:#edf1f7"></div><div class="r" style="left:1063.00px;top:408.60px;width:1.00px;height:45.40px;background:#edf1f7"></div><div class="r" style="left:1264.00px;top:408.60px;width:1.00px;height:45.40px;background:#edf1f7"></div><div class="t" style="left:15.60px;top:422.10px;font-size:17.4px;line-height:17.4px;color:#1e293b;font-weight:400;letter-spacing:0px;">21/04/2026, 03.03.04</div><div class="t" style="left:433.00px;top:422.75px;font-size:16.1px;line-height:16.1px;color:#0f172a;font-weight:700;letter-spacing:0px;">Genset1_Arus A</div><div class="t" style="left:762.20px;top:423.90px;font-size:13.8px;line-height:13.8px;color:#64748b;font-weight:400;letter-spacing:0px;">tag-mo7mgl2f-f0fqk</div><div class="t" style="left:1079.50px;top:422.45px;font-size:17.5px;line-height:17.5px;color:#1e293b;font-weight:400;letter-spacing:0px;">60286.0</div><div class="t" style="left:1280.80px;top:422.60px;font-size:16.4px;line-height:16.4px;color:#10b981;font-weight:400;letter-spacing:0px;">Good</div><div class="r" style="left:0.00px;top:454.00px;width:1448.00px;height:45.40px;background:#ffffff;border-bottom:1px solid #f1f5f9;box-sizing:border-box"></div><div class="r" style="left:416.00px;top:454.00px;width:1.00px;height:45.40px;background:#edf1f7"></div><div class="r" style="left:746.00px;top:454.00px;width:1.00px;height:45.40px;background:#edf1f7"></div><div class="r" style="left:1063.00px;top:454.00px;width:1.00px;height:45.40px;background:#edf1f7"></div><div class="r" style="left:1264.00px;top:454.00px;width:1.00px;height:45.40px;background:#edf1f7"></div><div class="t" style="left:15.60px;top:467.50px;font-size:17.4px;line-height:17.4px;color:#1e293b;font-weight:400;letter-spacing:0px;">21/04/2026, 03.03.05</div><div class="t" style="left:433.00px;top:468.15px;font-size:16.1px;line-height:16.1px;color:#0f172a;font-weight:700;letter-spacing:0px;">Genset1_Arus A</div><div class="t" style="left:762.20px;top:469.30px;font-size:13.8px;line-height:13.8px;color:#64748b;font-weight:400;letter-spacing:0px;">tag-mo7mgl2f-f0fqk</div><div class="t" style="left:1079.50px;top:467.85px;font-size:17.5px;line-height:17.5px;color:#1e293b;font-weight:400;letter-spacing:0px;">60287.0</div><div class="t" style="left:1280.80px;top:468.00px;font-size:16.4px;line-height:16.4px;color:#10b981;font-weight:400;letter-spacing:0px;">Good</div><div class="r" style="left:0.00px;top:499.40px;width:1448.00px;height:45.40px;background:#f8fafc;border-bottom:1px solid #f1f5f9;box-sizing:border-box"></div><div class="r" style="left:416.00px;top:499.40px;width:1.00px;height:45.40px;background:#edf1f7"></div><div class="r" style="left:746.00px;top:499.40px;width:1.00px;height:45.40px;background:#edf1f7"></div><div class="r" style="left:1063.00px;top:499.40px;width:1.00px;height:45.40px;background:#edf1f7"></div><div class="r" style="left:1264.00px;top:499.40px;width:1.00px;height:45.40px;background:#edf1f7"></div><div class="t" style="left:15.60px;top:512.90px;font-size:17.4px;line-height:17.4px;color:#1e293b;font-weight:400;letter-spacing:0px;">21/04/2026, 03.03.06</div><div class="t" style="left:433.00px;top:513.55px;font-size:16.1px;line-height:16.1px;color:#0f172a;font-weight:700;letter-spacing:0px;">Genset1_Arus A</div><div class="t" style="left:762.20px;top:514.70px;font-size:13.8px;line-height:13.8px;color:#64748b;font-weight:400;letter-spacing:0px;">tag-mo7mgl2f-f0fqk</div><div class="t" style="left:1079.50px;top:513.25px;font-size:17.5px;line-height:17.5px;color:#1e293b;font-weight:400;letter-spacing:0px;">60288.0</div><div class="t" style="left:1280.80px;top:513.40px;font-size:16.4px;line-height:16.4px;color:#10b981;font-weight:400;letter-spacing:0px;">Good</div><div class="r" style="left:0.00px;top:544.80px;width:1448.00px;height:45.40px;background:#ffffff;border-bottom:1px solid #f1f5f9;box-sizing:border-box"></div><div class="r" style="left:416.00px;top:544.80px;width:1.00px;height:45.40px;background:#edf1f7"></div><div class="r" style="left:746.00px;top:544.80px;width:1.00px;height:45.40px;background:#edf1f7"></div><div class="r" style="left:1063.00px;top:544.80px;width:1.00px;height:45.40px;background:#edf1f7"></div><div class="r" style="left:1264.00px;top:544.80px;width:1.00px;height:45.40px;background:#edf1f7"></div><div class="t" style="left:15.60px;top:558.30px;font-size:17.4px;line-height:17.4px;color:#1e293b;font-weight:400;letter-spacing:0px;">21/04/2026, 03.03.07</div><div class="t" style="left:433.00px;top:558.95px;font-size:16.1px;line-height:16.1px;color:#0f172a;font-weight:700;letter-spacing:0px;">Genset1_Arus A</div><div class="t" style="left:762.20px;top:560.10px;font-size:13.8px;line-height:13.8px;color:#64748b;font-weight:400;letter-spacing:0px;">tag-mo7mgl2f-f0fqk</div><div class="t" style="left:1079.50px;top:558.65px;font-size:17.5px;line-height:17.5px;color:#1e293b;font-weight:400;letter-spacing:0px;">2.0</div><div class="t" style="left:1280.80px;top:558.80px;font-size:16.4px;line-height:16.4px;color:#10b981;font-weight:400;letter-spacing:0px;">Good</div><div class="r" style="left:0.00px;top:590.20px;width:1448.00px;height:45.40px;background:#f8fafc;border-bottom:1px solid #f1f5f9;box-sizing:border-box"></div><div class="r" style="left:416.00px;top:590.20px;width:1.00px;height:45.40px;background:#edf1f7"></div><div class="r" style="left:746.00px;top:590.20px;width:1.00px;height:45.40px;background:#edf1f7"></div><div class="r" style="left:1063.00px;top:590.20px;width:1.00px;height:45.40px;background:#edf1f7"></div><div class="r" style="left:1264.00px;top:590.20px;width:1.00px;height:45.40px;background:#edf1f7"></div><div class="t" style="left:15.60px;top:603.70px;font-size:17.4px;line-height:17.4px;color:#1e293b;font-weight:400;letter-spacing:0px;">21/04/2026, 03.03.08</div><div class="t" style="left:433.00px;top:604.35px;font-size:16.1px;line-height:16.1px;color:#0f172a;font-weight:700;letter-spacing:0px;">Genset1_Arus A</div><div class="t" style="left:762.20px;top:605.50px;font-size:13.8px;line-height:13.8px;color:#64748b;font-weight:400;letter-spacing:0px;">tag-mo7mgl2f-f0fqk</div><div class="t" style="left:1079.50px;top:604.05px;font-size:17.5px;line-height:17.5px;color:#1e293b;font-weight:400;letter-spacing:0px;">3.0</div><div class="t" style="left:1280.80px;top:604.20px;font-size:16.4px;line-height:16.4px;color:#10b981;font-weight:400;letter-spacing:0px;">Good</div><div class="r" style="left:0.00px;top:635.60px;width:1448.00px;height:45.40px;background:#ffffff;border-bottom:1px solid #f1f5f9;box-sizing:border-box"></div><div class="r" style="left:416.00px;top:635.60px;width:1.00px;height:45.40px;background:#edf1f7"></div><div class="r" style="left:746.00px;top:635.60px;width:1.00px;height:45.40px;background:#edf1f7"></div><div class="r" style="left:1063.00px;top:635.60px;width:1.00px;height:45.40px;background:#edf1f7"></div><div class="r" style="left:1264.00px;top:635.60px;width:1.00px;height:45.40px;background:#edf1f7"></div><div class="t" style="left:15.60px;top:649.10px;font-size:17.4px;line-height:17.4px;color:#1e293b;font-weight:400;letter-spacing:0px;">21/04/2026, 03.03.09</div><div class="t" style="left:433.00px;top:649.75px;font-size:16.1px;line-height:16.1px;color:#0f172a;font-weight:700;letter-spacing:0px;">Genset1_Arus A</div><div class="t" style="left:762.20px;top:650.90px;font-size:13.8px;line-height:13.8px;color:#64748b;font-weight:400;letter-spacing:0px;">tag-mo7mgl2f-f0fqk</div><div class="t" style="left:1079.50px;top:649.45px;font-size:17.5px;line-height:17.5px;color:#1e293b;font-weight:400;letter-spacing:0px;">4.0</div><div class="t" style="left:1280.80px;top:649.60px;font-size:16.4px;line-height:16.4px;color:#10b981;font-weight:400;letter-spacing:0px;">Good</div></div><div class="r" style="left:1794.00px;top:248.00px;width:7.00px;height:688.00px;background:#fff"></div><div class="r" style="left:1793.00px;top:248.00px;width:1.00px;height:688.00px;background:#e2e8f0"></div><div class="r" style="left:1794.00px;top:248.00px;width:7.00px;height:21.00px;background:#d9dee6;border-radius:1px 1px 4px 4px"></div><div class="r" style="left:346.00px;top:936.00px;width:1455.00px;height:35.00px;background:#f8fafc;border-top:1px solid #e2e8f0;box-sizing:border-box;border-radius:0 0 7px 7px"></div><div class="r" style="left:366.00px;top:949.00px;width:10.00px;height:10.00px;background:#10b981;border-radius:50%"></div><div class="t" style="left:384.00px;top:946.00px;font-size:14.4px;line-height:14.4px;color:#64748b;font-weight:400;letter-spacing:0px;">Database Connected</div><div class="t" style="left:550.70px;top:946.10px;font-size:14.2px;line-height:14.2px;color:#64748b;font-weight:400;letter-spacing:0px;">Total Rows: 1000</div><div class="t" style="left:690.70px;top:946.10px;font-size:14.2px;line-height:14.2px;color:#64748b;font-weight:400;letter-spacing:0px;">Selected Tags: 1</div></div>
</body></html>
